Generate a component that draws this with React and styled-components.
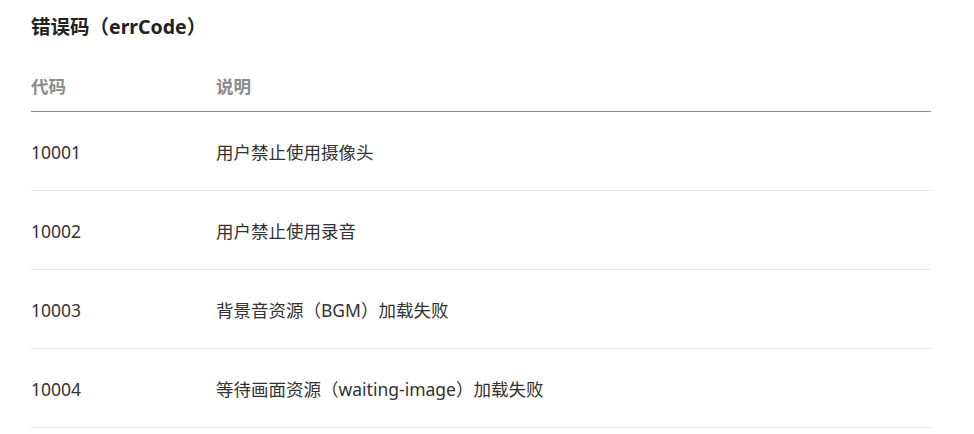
import React from 'react';
import styled, { createGlobalStyle } from 'styled-components';

const GlobalStyle = createGlobalStyle`
  body {
    margin: 0;
    background: #fff;
    font-family: "Segoe UI", "Noto Sans", "Noto Sans CJK SC", sans-serif;
  }
`

const rows = [
  { code: '10001', desc: '用户禁止使用摄像头' },
  { code: '10002', desc: '用户禁止使用录音' },
  { code: '10003', desc: '背景音资源（BGM）加载失败' },
  { code: '10004', desc: '等待画面资源（waiting-image）加载失败' },
]

export default function App() {
  return (
    <Page>
      <GlobalStyle />
      <Title>错误码（errCode）</Title>
      <Table>
        <thead>
          <tr>
            <Th width="185px">代码</Th>
            <Th>说明</Th>
          </tr>
        </thead>
        <tbody>
          {rows.map((r) => (
            <tr key={r.code}>
              <Td>{r.code}</Td>
              <Td>{r.desc}</Td>
            </tr>
          ))}
        </tbody>
      </Table>
    </Page>
  )
}

const Page = styled.div`
  padding: 13px 0 0 31px;
  width: 900px;
`

const Title = styled.h3`
  margin: 0;
  font-size: 19.5px;
  line-height: 28px;
  font-weight: 700;
  color: #222;
`

const Table = styled.table`
  width: 100%;
  margin-top: 33px;
  border-collapse: collapse;
`

const Th = styled.th`
  width: ${props => props.width || 'auto'};
  text-align: left;
  padding: 0 0 13px;
  font-size: 17.5px;
  line-height: 24px;
  font-weight: 700;
  color: #8a8a8a;
  border-bottom: 1px solid #888;
`

const Td = styled.td`
  padding: 28px 0 26px;
  font-size: 17.5px;
  line-height: 24px;
  color: #333;
  border-bottom: 1px solid #e5e5e5;
`
